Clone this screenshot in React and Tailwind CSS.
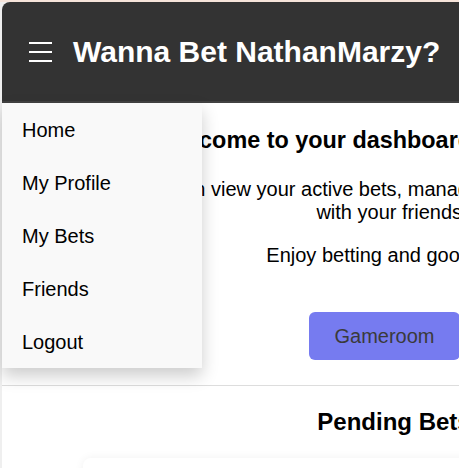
import { useState } from 'react';

const links = ['Home', 'My Profile', 'My Bets', 'Friends', 'Logout'];

export default function App() {
  const [menuOpen, setMenuOpen] = useState(true);

  return (
    <div className="w-screen h-screen overflow-hidden bg-[#efefef] border-t-2 border-[#f6e4da] pl-[2px] font-['Liberation_Sans',Arial,sans-serif]">
      <div className="relative w-[780px] min-h-[600px] bg-white rounded-tl-lg">
        {/* Barra superior */}
        <header className="h-[101px] bg-[#333333] border-b-2 border-[#424242] rounded-tl-lg flex items-center pl-[27px]">
          <button
            className="flex flex-col gap-[7px] focus:outline-none"
            onClick={() => setMenuOpen(!menuOpen)}
          >
            <span className="block w-[23px] h-[2px] bg-white"></span>
            <span className="block w-[23px] h-[2px] bg-white"></span>
            <span className="block w-[23px] h-[2px] bg-white"></span>
          </button>
          <h1 className="ml-[21px] text-[30px] leading-[34px] font-bold text-white whitespace-nowrap">
            Wanna Bet NathanMarzy?
          </h1>
        </header>

        {/* Menu lateral */}
        {menuOpen && (
          <nav className="absolute left-0 top-[101px] z-10 w-[200px] bg-[#f9f9f9] shadow-[0_8px_16px_rgba(0,0,0,0.2)]">
            {links.map((link) => (
              <a key={link} href="#" className="block px-[20px] pt-[16px] pb-[14px] text-[20px] leading-[23px] text-black">
                {link}
              </a>
            ))}
          </nav>
        )}

        {/* Conteúdo */}
        <main className="flex flex-col items-center text-center text-black pt-[23px]">
          <h2 className="mr-[54px] text-[23.4px] leading-[28px] font-bold whitespace-nowrap">
            Welcome to your dashboard, Nathan!
          </h2>
          <p className="mt-[24px] w-[540px] text-[20px] leading-[23px]">
            You can view your active bets, manage your bets and chat with your friends.
          </p>
          <p className="mt-[20px] text-[20px] leading-[23px]">Enjoy betting and good luck!</p>

          <button className="mt-[45px] mr-[15px] h-[48px] px-[25px] rounded-md bg-[#767bf0] text-[20px] text-[#3a3a3a]">
            Gameroom
          </button>

          <div className="mt-[25px] w-full h-px bg-[#dddddd]"></div>

          <h3 className="mt-[22px] ml-[4px] text-[24px] leading-[28px] font-bold whitespace-nowrap">Pending Bets</h3>

          <div className="mt-[22px] w-[618px] h-[120px] bg-white rounded-lg shadow-[0_0_10px_rgba(0,0,0,0.06)]"></div>
        </main>
      </div>
    </div>
  );
}
